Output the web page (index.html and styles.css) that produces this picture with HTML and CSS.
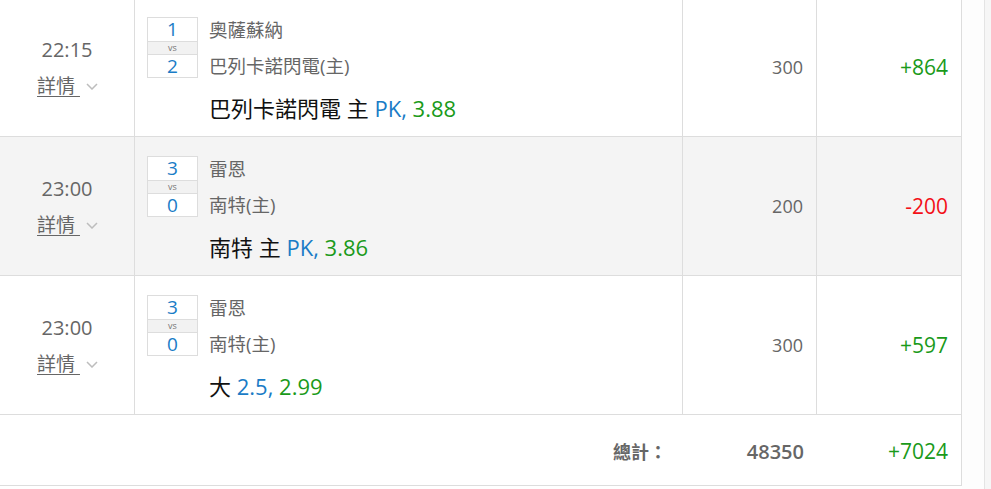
FILE: index.html
```html
<!DOCTYPE html>
<html lang="zh-Hant">
<head>
<meta charset="utf-8">
<title>注單</title>
<link rel="stylesheet" href="styles.css">
</head>
<body>
<div class="page">
  <div class="bets">
    <div class="row">
      <div class="cell c-time">
        <div class="time">22:15</div>
        <div class="detail"><a class="link" href="#">詳情 </a><svg class="chev" width="12" height="7" viewBox="0 0 12 7"><polyline points="1,1 6,6 11,1" fill="none" stroke="#bdbdbd" stroke-width="1.5"/></svg></div>
      </div>
      <div class="cell c-match">
        <div class="score"><span class="num">1</span><span class="vs">vs</span><span class="num">2</span></div>
        <div class="teams">
          <div class="team">奧薩蘇納</div>
          <div class="team team2">巴列卡諾閃電(主)</div>
          <div class="pick">巴列卡諾閃電 主 <span class="blue">PK,</span> <span class="green">3.88</span></div>
        </div>
      </div>
      <div class="cell c-num">300</div>
      <div class="cell c-num c-win green">+864</div>
    </div>

    <div class="row alt">
      <div class="cell c-time">
        <div class="time">23:00</div>
        <div class="detail"><a class="link" href="#">詳情 </a><svg class="chev" width="12" height="7" viewBox="0 0 12 7"><polyline points="1,1 6,6 11,1" fill="none" stroke="#bdbdbd" stroke-width="1.5"/></svg></div>
      </div>
      <div class="cell c-match">
        <div class="score"><span class="num">3</span><span class="vs">vs</span><span class="num">0</span></div>
        <div class="teams">
          <div class="team">雷恩</div>
          <div class="team team2">南特(主)</div>
          <div class="pick">南特 主 <span class="blue">PK,</span> <span class="green">3.86</span></div>
        </div>
      </div>
      <div class="cell c-num">200</div>
      <div class="cell c-num c-win red">-200</div>
    </div>

    <div class="row">
      <div class="cell c-time">
        <div class="time">23:00</div>
        <div class="detail"><a class="link" href="#">詳情 </a><svg class="chev" width="12" height="7" viewBox="0 0 12 7"><polyline points="1,1 6,6 11,1" fill="none" stroke="#bdbdbd" stroke-width="1.5"/></svg></div>
      </div>
      <div class="cell c-match">
        <div class="score"><span class="num">3</span><span class="vs">vs</span><span class="num">0</span></div>
        <div class="teams">
          <div class="team">雷恩</div>
          <div class="team team2">南特(主)</div>
          <div class="pick">大 <span class="blue">2.5,</span> <span class="green">2.99</span></div>
        </div>
      </div>
      <div class="cell c-num">300</div>
      <div class="cell c-num c-win green">+597</div>
    </div>

    <div class="row total">
      <div class="cell c-label">總計：</div>
      <div class="cell c-num strong">48350</div>
      <div class="cell c-num c-win green big">+7024</div>
    </div>
  </div>
  <div class="gutter"></div>
  <div class="scroll"></div>
</div>
</body>
</html>
```

FILE: styles.css
```css
html, body {
  margin: 0;
  padding: 0;
  background: #ffffff;
}

body {
  font-family: "Open Sans", "Noto Sans CJK TC", sans-serif;
  color: #666666;
  font-size: 18px;
  overflow: hidden;
}

.page {
  display: flex;
  height: 489px;
}

.bets {
  width: 962px;
  flex: none;
  margin-top: -2px;
}

.gutter {
  width: 22px;
  flex: none;
  background: #fdfdfd;
}

.scroll {
  flex: 1;
  border-left: 1px solid #e4e4e4;
  background: #f6f6f6;
}

.row {
  display: grid;
  grid-template-columns: 135px 548px 134px 145px;
  height: 139px;
  box-sizing: border-box;
  border-bottom: 1px solid #dddddd;
  background: #ffffff;
}

.row.alt {
  background: #f4f4f4;
}

.cell {
  box-sizing: border-box;
  border-right: 1px solid #dddddd;
}

.c-time {
  display: flex;
  flex-direction: column;
  align-items: center;
  justify-content: center;
  padding-top: 2px;
}

.time {
  line-height: 36px;
  font-size: 20px;
}

.detail {
  display: flex;
  align-items: center;
  line-height: 36px;
  padding-left: 1px;
}

.link {
  color: #666666;
  text-decoration: underline;
  text-underline-offset: 3px;
  font-size: 19px;
  white-space: pre;
}

.chev {
  margin-left: 6px;
  margin-top: 1px;
}

.c-match {
  display: flex;
  align-items: flex-start;
  padding: 19px 0 0 12px;
}

.score {
  width: 51px;
  box-sizing: border-box;
  border: 1px solid #dddddd;
  background: #ffffff;
  display: flex;
  flex-direction: column;
  text-align: center;
  flex: none;
}

.num {
  color: #1a7cc6;
  font-size: 19px;
  line-height: 23px;
  height: 23px;
}

.num + .vs + .num {
  height: 22px;
  line-height: 22px;
}

.vs {
  height: 12px;
  line-height: 12px;
  font-size: 9px;
  color: #777777;
  background: #f2f2f2;
  border-top: 1px solid #dddddd;
  border-bottom: 1px solid #dddddd;
}

.teams {
  margin-left: 11px;
  display: flex;
  flex-direction: column;
}

.team {
  line-height: 26px;
  font-size: 18.5px;
  color: #666666;
}

.team2 {
  margin-top: 10px;
}

.pick {
  margin-top: 14px;
  line-height: 30px;
  font-size: 22px;
  color: #111111;
  white-space: pre;
}

.blue {
  color: #1a7cc6;
}

.green {
  color: #1a9a1a;
}

.red {
  color: #f30f17;
}

.c-num {
  display: flex;
  align-items: center;
  justify-content: flex-end;
  padding-right: 13px;
  font-size: 18px;
}

.c-win {
  font-size: 21px;
}

.total {
  height: 71px;
  grid-template-columns: 683px 134px 145px;
}

.total .cell {
  border-right: none;
}

.total .cell:last-child {
  border-right: 1px solid #dddddd;
}

.c-label {
  display: flex;
  align-items: center;
  justify-content: flex-end;
  padding-right: 16px;
  font-size: 18px;
  font-weight: 700;
  color: #666666;
  padding-top: 2px;
}

.strong {
  font-size: 20px;
  font-weight: 600;
  color: #666666;
  padding-top: 2px;
}

.big {
  padding-top: 2px;
}
```
